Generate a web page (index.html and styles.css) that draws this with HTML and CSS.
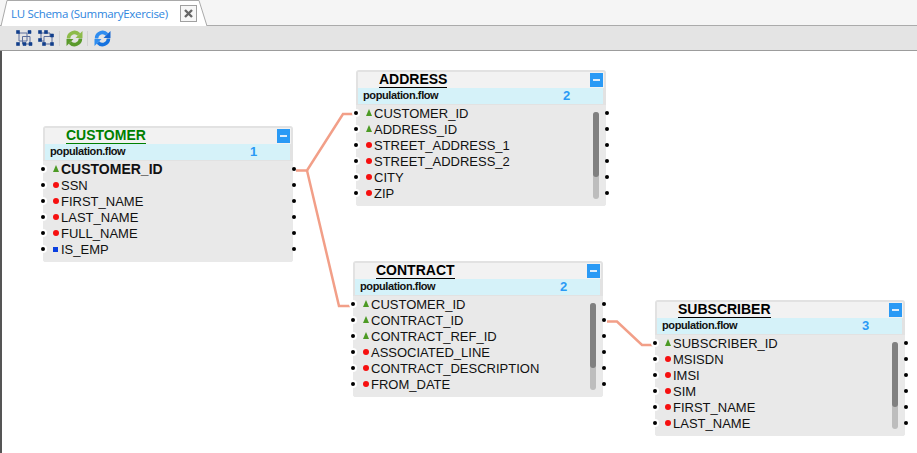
FILE: index.html
```html
<!DOCTYPE html>
<html lang="en">

<head>
    <meta charset="UTF-8">
    <title>LU Schema</title>
    <link rel="stylesheet" href="styles.css">
</head>

<body>
    <div class="tabbar">
        <div class="tab">
            <svg class="tab-shape" width="210" height="26" viewBox="0 0 210 26">
                <path d="M1 26 L7 .5 H199 L207 26" fill="#fff" stroke="#a9a9a9" />
            </svg>
            <span class="tab-title">LU Schema (SummaryExercise)</span>
            <span class="tab-close">
                <svg width="11" height="11" viewBox="0 0 11 11">
                    <path d="M2 2 L9 9 M9 2 L2 9" stroke="#666" stroke-width="2.4" />
                </svg>
            </span>
        </div>
    </div>

    <div class="toolbar">
        <span class="grip"></span>
        <button class="tool">
            <svg width="17" height="17" viewBox="0 0 17 17">
                <path d="M3 3H11V11H3Z M6.500 6.500H14V14H6.500Z" fill="none" stroke="#5c6f9c" />
                <path d="M.5 .5h3v3h-3z M12 .5h3v3h-3z M.5 12.500h3v3h-3z M7 12.500h3v3H7z M13 12.500h3v3h-3z" fill="#123f8c" stroke="#123f8c" stroke-width=".6" />
            </svg>
        </button>
        <button class="tool tool-tight">
            <svg width="17" height="17" viewBox="0 0 17 17">
                <path d="M3 3H12V6 M6 6.500H14V14H6Z M3 3V11H6" fill="none" stroke="#5c6f9c" />
                <path d="M.5 .5h3v3h-3z M6.500 .5h3v3h-3z M12.500 4h3v3h-3z M.5 8.500h3v3h-3z M4.500 12.500h3v3h-3z M12.500 12.500h3v3h-3z" fill="#123f8c" stroke="#123f8c" stroke-width=".6" />
            </svg>
        </button>
        <span class="sep"></span>
        <button class="tool">
            <svg width="17" height="17" viewBox="0 0 17 17">
                <path d="M2.500 8.500 A6 6 0 0 1 13 4.500" fill="none" stroke="#8dbb4a" stroke-width="3.500" />
                <path d="M9.500 8 H16.500 V1Z" fill="#8dbb4a" />
                <path d="M14.500 8.500 A6 6 0 0 1 4 12.500" fill="none" stroke="#5a9a2c" stroke-width="3.500" />
                <path d="M7.500 9 H.5 V16Z" fill="#5a9a2c" />
            </svg>
        </button>
        <span class="sep"></span>
        <button class="tool">
            <svg width="17" height="17" viewBox="0 0 17 17">
                <path d="M2.500 8.500 A6 6 0 0 1 13 4.500" fill="none" stroke="#2f8df0" stroke-width="3.500" />
                <path d="M9.500 8 H16.500 V1Z" fill="#1667d2" />
                <path d="M14.500 8.500 A6 6 0 0 1 4 12.500" fill="none" stroke="#1673e0" stroke-width="3.500" />
                <path d="M7.500 9 H.5 V16Z" fill="#2f8df0" />
            </svg>
        </button>
    </div>

    <div class="canvas">
        <svg class="links" width="917" height="403" viewBox="0 50 917 403">
            <path d="M296 169.500 H307 L343 113 H353" />
            <path d="M307 169.500 L339 305 H350" />
            <path d="M607 320.500 H617 L642 344 H653" />
        </svg>

        <div class="node node-customer">
            <div class="node-title">
                <span class="title-text title-root">CUSTOMER</span>
                <span class="collapse"></span>
            </div>
            <div class="node-flow"><span>population.flow</span><span class="flow-num">1</span></div>
            <ul class="fields">
                <li class="field key strong">CUSTOMER_ID</li>
                <li class="field req">SSN</li>
                <li class="field req">FIRST_NAME</li>
                <li class="field req">LAST_NAME</li>
                <li class="field req">FULL_NAME</li>
                <li class="field opt">IS_EMP</li>
            </ul>
        </div>

        <div class="node node-address">
            <div class="node-title">
                <span class="title-text">ADDRESS</span>
                <span class="collapse"></span>
            </div>
            <div class="node-flow"><span>population.flow</span><span class="flow-num">2</span></div>
            <ul class="fields">
                <li class="field key">CUSTOMER_ID</li>
                <li class="field key">ADDRESS_ID</li>
                <li class="field req">STREET_ADDRESS_1</li>
                <li class="field req">STREET_ADDRESS_2</li>
                <li class="field req">CITY</li>
                <li class="field req">ZIP</li>
            </ul>
            <div class="scroll"><div class="thumb"></div></div>
        </div>

        <div class="node node-contract">
            <div class="node-title">
                <span class="title-text">CONTRACT</span>
                <span class="collapse"></span>
            </div>
            <div class="node-flow"><span>population.flow</span><span class="flow-num">2</span></div>
            <ul class="fields">
                <li class="field key">CUSTOMER_ID</li>
                <li class="field key">CONTRACT_ID</li>
                <li class="field key">CONTRACT_REF_ID</li>
                <li class="field req">ASSOCIATED_LINE</li>
                <li class="field req">CONTRACT_DESCRIPTION</li>
                <li class="field req">FROM_DATE</li>
            </ul>
            <div class="scroll"><div class="thumb"></div></div>
        </div>

        <div class="node node-subscriber">
            <div class="node-title">
                <span class="title-text">SUBSCRIBER</span>
                <span class="collapse"></span>
            </div>
            <div class="node-flow"><span>population.flow</span><span class="flow-num">3</span></div>
            <ul class="fields">
                <li class="field key">SUBSCRIBER_ID</li>
                <li class="field req">MSISDN</li>
                <li class="field req">IMSI</li>
                <li class="field req">SIM</li>
                <li class="field req">FIRST_NAME</li>
                <li class="field req">LAST_NAME</li>
            </ul>
            <div class="scroll"><div class="thumb"></div></div>
        </div>
    </div>
</body>

</html>
```

FILE: styles.css
```css
html,
body {
    margin: 0;
    height: 100%;
    overflow: hidden;
}

body {
    display: flex;
    flex-direction: column;
    font-family: "Liberation Sans", Arial, sans-serif;
    background-color: #fff;
}

.tabbar {
    height: 25px;
    flex: none;
    background-color: #f5f5f5;
    border-bottom: 1px solid #ababab;
}

.tab {
    position: relative;
    width: 210px;
    height: 26px;
    display: flex;
    align-items: center;
    padding-left: 11px;
    box-sizing: border-box;
}

.tab-shape {
    position: absolute;
    left: 0;
    top: 0;
}

.tab-title {
    position: relative;
    width: 169px;
    color: #2e86de;
    font-family: "Open Sans", sans-serif;
    font-size: 11.500px;
    letter-spacing: -.3px;
    white-space: nowrap;
}

.tab-close {
    position: relative;
    width: 15px;
    height: 15px;
    display: flex;
    align-items: center;
    justify-content: center;
    border: 1px solid #a0a0a0;
    background-color: #f7f7f7;
}

.toolbar {
    height: 24px;
    flex: none;
    display: flex;
    align-items: center;
    background-color: #e4e4e4;
    border-bottom: 1px solid #9c9c9c;
}

.grip {
    width: 4px;
    height: 18px;
    margin: 0 7px 0 4px;
    background-image: radial-gradient(#a8a8a8 45%, transparent 50%);
    background-size: 2px 2px;
}

.tool {
    width: 17px;
    height: 17px;
    padding: 0;
    border: none;
    background: none;
    margin-left: 1px;
    display: block;
}

.tool-tight {
    margin-left: 5px;
}

.sep {
    width: 1px;
    height: 15px;
    margin: 0 5px 0 4px;
    background-color: #d2d2d2;
}

.canvas {
    position: relative;
    flex: 1;
    border-left: 2px solid #555;
}

.links {
    position: absolute;
    left: -2px;
    top: 0;
}

.links path {
    fill: none;
    stroke: #f29f88;
    stroke-width: 2.500;
}

.node {
    position: absolute;
    width: 250px;
    box-sizing: border-box;
    padding-top: 2px;
    border-radius: 3px;
    background-color: #e2e2e2;
}

.node-customer {
    left: 41px;
    top: 75px;
}

.node-address {
    left: 354px;
    top: 19px;
}

.node-contract {
    left: 351px;
    top: 210px;
}

.node-subscriber {
    left: 653px;
    top: 249px;
}

.node-title {
    height: 16px;
    margin: 0 2px;
    padding-left: 21px;
    display: flex;
    align-items: center;
    justify-content: space-between;
    background-color: #f2f2f2;
}

.title-text {
    font-size: 14px;
    font-weight: bold;
    line-height: 15px;
    color: #000;
    border-bottom: 1px solid #000;
}

.title-root {
    color: #008000;
    border-bottom-color: #008000;
}

.collapse {
    position: relative;
    width: 13px;
    height: 14px;
    margin-right: 1px;
    background-color: #2a9af5;
}

.collapse::after {
    content: "";
    position: absolute;
    left: 3px;
    right: 3px;
    top: 6px;
    height: 2px;
    background-color: #dcecfb;
}

.node-flow {
    height: 14px;
    margin: 0 3px 1px 2px;
    padding: 0 0 2px 5px;
    display: flex;
    align-items: center;
    background-color: #d5f2f9;
    font-size: 11px;
    font-weight: bold;
    letter-spacing: -.4px;
    color: #111;
}

.node-flow span:first-child {
    width: 200px;
}

.flow-num {
    font-size: 13px;
    color: #2a9af5;
}

.fields {
    list-style: none;
    margin: 0;
    padding: 0 0 5px;
    background-color: #e9e9e9;
    border-radius: 0 0 3px 3px;
}

.field {
    position: relative;
    height: 16px;
    line-height: 18px;
    padding-left: 18px;
    font-size: 13px;
    color: #111;
}

.field::before {
    content: "";
    position: absolute;
    left: 10px;
    top: 5px;
    width: 6px;
    height: 6px;
}

.req::before {
    border-radius: 50%;
    background-color: #f60f0f;
}

.key::before {
    top: 4px;
    height: 7px;
    clip-path: polygon(50% 0, 100% 100%, 0 100%);
    background-color: #4c9a24;
}

.opt::before {
    top: 6px;
    width: 5px;
    height: 5px;
    background-color: #0a3fe0;
}

.strong {
    font-size: 14px;
    font-weight: bold;
    line-height: 16px;
}

/* left port with its halo, the shadow gives the right port of the same row */
.field::after {
    content: "";
    position: absolute;
    left: -2px;
    top: 6px;
    width: 4px;
    height: 4px;
    border-radius: 50%;
    background-color: #000;
    box-shadow: 0 0 0 2px #fff, 251px 0 0 #000;
}

.scroll {
    position: absolute;
    right: 7px;
    top: 42px;
    width: 6px;
    height: 87px;
    border-radius: 3px;
    background-color: #bdbdbd;
}

.thumb {
    height: 65px;
    border-radius: 3px;
    background-color: #808080;
}
```
